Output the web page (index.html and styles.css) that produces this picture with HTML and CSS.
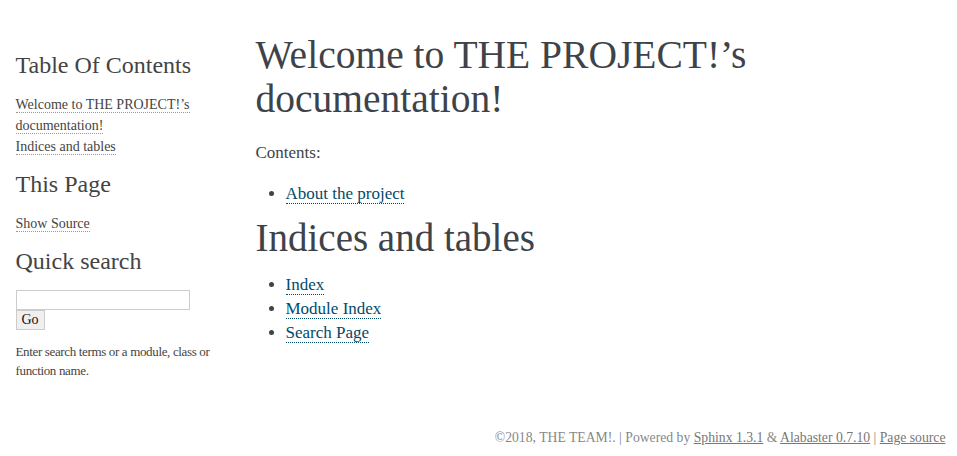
FILE: index.html
```html
<!DOCTYPE html>
<html>
<head>
<meta charset="utf-8">
<title>Welcome to THE PROJECT!’s documentation!</title>
<link rel="stylesheet" href="styles.css">
</head>
<body>
<div class="document">
  <div class="sidebar">
    <h3 class="side-title">Table Of Contents</h3>
    <ul class="side-list">
      <li><a class="side-link" href="#">Welcome to THE PROJECT!’s documentation!</a></li>
      <li><a class="side-link" href="#">Indices and tables</a></li>
    </ul>
    <h3 class="side-title">This Page</h3>
    <ul class="side-list">
      <li><a class="side-link" href="#">Show Source</a></li>
    </ul>
    <h3 class="side-title">Quick search</h3>
    <form class="search">
      <input class="search-input" type="text">
      <button class="search-btn" type="button">Go</button>
    </form>
    <p class="search-hint">Enter search terms or a module, class or function name.</p>
  </div>
  <div class="body">
    <h1 class="title">Welcome to THE PROJECT!’s documentation!</h1>
    <p class="caption">Contents:</p>
    <ul class="toc">
      <li><a class="ref" href="#">About the project</a></li>
    </ul>
    <h2 class="subtitle">Indices and tables</h2>
    <ul class="toc">
      <li><a class="ref" href="#">Index</a></li>
      <li><a class="ref" href="#">Module Index</a></li>
      <li><a class="ref" href="#">Search Page</a></li>
    </ul>
  </div>
</div>
<div class="footer">
  ©2018, THE TEAM!. | Powered by <a class="foot-link" href="#">Sphinx 1.3.1</a> &amp; <a class="foot-link" href="#">Alabaster 0.7.10</a> | <a class="foot-link" href="#">Page source</a>
</div>
</body>
</html>
```
FILE: styles.css
```css
html, body {
  margin: 0;
  padding: 0;
  background: #fff;
}
body {
  font-family: "Liberation Serif", "Times New Roman", serif;
  font-size: 17px;
  color: #3E4349;
}
.document {
  width: 940px;
  margin: 30px auto 0 auto;
  display: flex;
}
.sidebar {
  width: 212px;
  flex: none;
  padding: 21px 0 0 15px;
  margin-left: -8px;
  font-size: 14px;
  line-height: 1.5;
  color: #444;
}
.side-title {
  font-weight: normal;
  font-size: 24px;
  margin: 0 0 14px 0;
  line-height: 1.2;
  color: #444;
}
.side-list {
  list-style: none;
  margin: 0 0 13px 0;
  padding: 0;
}
.side-link {
  color: #444;
  text-decoration: none;
  border-bottom: 1px dotted #999;
}
.search {
  margin: 15px 0 0 0;
  display: flex;
  flex-direction: column;
  align-items: flex-start;
}
.search-input {
  width: 168px;
  height: 16px;
  border: 1px solid #ccc;
  padding: 1px 2px;
  margin: 0;
  font-family: inherit;
}
.search-btn {
  font-family: "Liberation Serif", serif;
  font-size: 14px;
  background: #efefef;
  border: 1px solid #ccc;
  padding: 0 5px;
  height: 20px;
  margin: 0;
  color: #111;
}
.search-hint {
  font-size: 13px;
  letter-spacing: -0.35px;
  line-height: 19px;
  margin: 12px 0 0 0;
}
.body {
  flex: 1;
  padding: 0 30px 0 28px;
}
.title {
  font-weight: normal;
  font-size: 39.5px;
  line-height: 44px;
  margin: 3px 0 0 0;
}
.caption {
  margin: 20px 0 0 0;
  line-height: 24px;
}
.toc {
  margin: 17px 0 0 0;
  padding-left: 30px;
  line-height: 24px;
}
.ref {
  color: #004B6B;
  text-decoration: none;
  border-bottom: 1px dotted #004B6B;
}
.subtitle {
  font-weight: normal;
  font-size: 39px;
  line-height: 44px;
  margin: 10px 0 0 0;
}
.subtitle + .toc {
  margin-top: 13px;
}
.footer {
  width: 940px;
  margin: 50px auto 0 auto;
  font-size: 13.7px;
  color: #888;
  text-align: right;
  position: relative;
  left: -3px;
}
.foot-link {
  color: #777;
  text-decoration: underline;
}
```
